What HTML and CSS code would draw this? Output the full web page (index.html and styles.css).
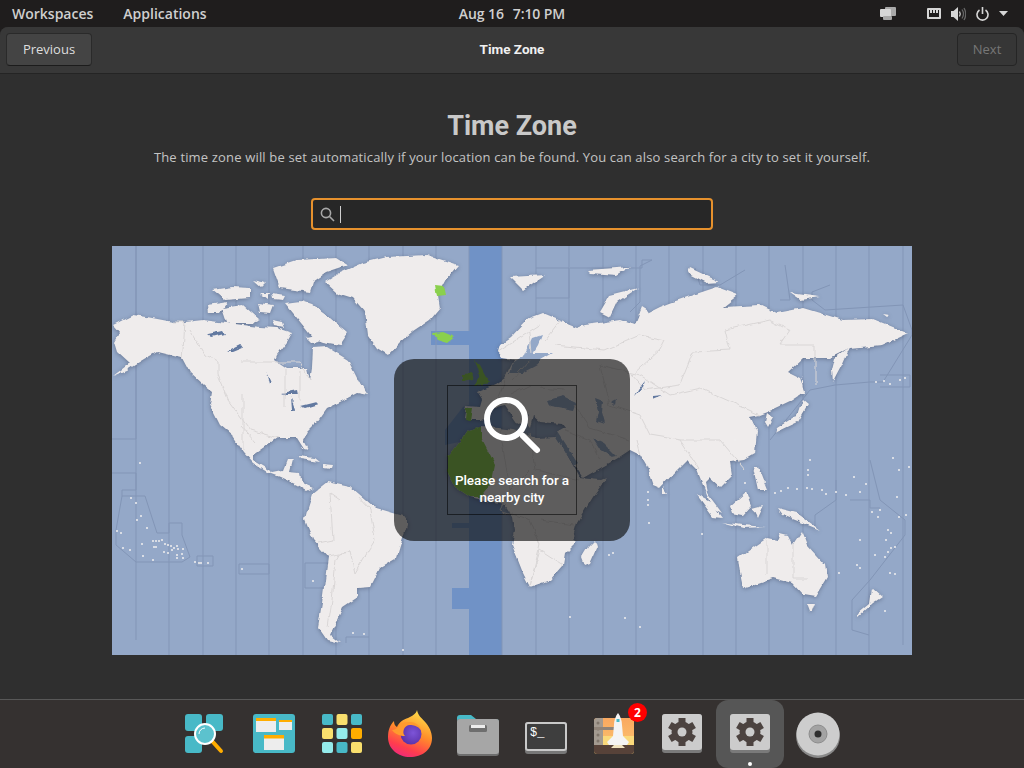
FILE: index.html
```html
<!DOCTYPE html>
<html lang="en">
<head>
<meta charset="utf-8">
<title>Time Zone</title>
<link rel="stylesheet" href="styles.css">
</head>
<body>
<div class="topbar">
  <div class="tb-left"><span class="tb-item">Workspaces</span><span class="tb-item">Applications</span></div>
  <div class="tb-clock"><span>Aug 16</span><span>7:10 PM</span></div>
  <div class="tb-right">
    <svg class="ic-windows" width="16" height="13" viewBox="0 0 16 13"><rect x="5" y="0" width="11" height="9" rx="1" class="gl-dim"/><rect x="0" y="2" width="11" height="8" rx="1" class="gl"/><rect x="3" y="9" width="9" height="4" rx="1" class="gl-dim"/></svg>
    <svg class="ic-net" width="14" height="12" viewBox="0 0 14 12"><path class="gl" fill-rule="evenodd" d="M1 0h12a1 1 0 0 1 1 1v9a1 1 0 0 1-1 1H1a1 1 0 0 1-1-1V1a1 1 0 0 1 1-1zM2 2v7h10V2h-1v3H9V2H8v3H6V2H5v3H3V2z"/></svg>
    <svg class="ic-vol" width="15" height="14" viewBox="0 0 15 14"><path class="gl" d="M0 4h2.500L7 0v14L2.500 10H0z"/><path class="st-gl" d="M8.500 4.500q1.500 2.500 0 5"/><path class="st-dim" d="M11 2.500q3 4.500 0 9M13 1q3.500 6 0 12"/></svg>
    <svg class="ic-pow" width="13" height="14" viewBox="0 0 13 14"><path class="st-gl2" d="M3.500 3a5.500 5.500 0 1 0 6 0M6.500 0v7"/></svg>
    <svg class="ic-caret" width="9" height="5" viewBox="0 0 9 5"><path class="gl" d="M0 0h9L4.500 5z"/></svg>
  </div>
</div>

<div class="window">
  <header class="headerbar">
    <button class="btn btn-prev">Previous</button>
    <div class="hb-title">Time Zone</div>
    <button class="btn btn-next">Next</button>
  </header>
  <main class="content">
    <h1 class="title">Time Zone</h1>
    <p class="subtitle">The time zone will be set automatically if your location can be found. You can also search for a city to set it yourself.</p>
    <div class="entry">
      <svg width="15" height="15" viewBox="0 0 15 15"><circle cx="6" cy="6" r="4.600" class="st-search"/><path class="st-search" d="M9.500 9.500l4.500 4.500"/></svg>
      <span class="caret"></span>
    </div>
    <div class="map">
      <svg class="map-svg" width="800" height="409" viewBox="112 246 800 409">
        <defs>
          <filter id="rough" filterUnits="userSpaceOnUse" x="112" y="246" width="800" height="409" color-interpolation-filters="sRGB">
            <feTurbulence type="fractalNoise" baseFrequency="0.09" numOctaves="3" seed="7" result="n"/>
            <feDisplacementMap in="SourceGraphic" in2="n" scale="5" xChannelSelector="R" yChannelSelector="G"/>
          </filter>
        </defs>
        <rect x="112" y="246" width="800" height="409" class="sea"/>
        <path class="band" d="M469 246h33v409h-33v-46h-17v-21h17v-60h-17v-5h17v-83l-24 5v-15l18-23 6-2v-60h-38v-14h38z"/>
        <path class="tz" d="M136 246V640M169 246V655M203 246V655M236 246V655M269 246V655M303 246V655M336 246V655M369 246V655M403 246V655M436 246V655M469 246V331M502 246V655M536 246V655M569 246V655M603 246V655M636 246V655M669 246V655M703 246V655M736 246V655M769 246V655M803 246V655M836 246V655M869 246V655M903 246V645"/>
        <path class="tz" d="M112 439H136V246M112 473H136V490H122V496H145L157 533H169V523H182V535L190 557L182 562H136L116 545V530L122 496M346 643V637H369M305 563H328V588H305zM239 564H269V574H239zM197 556H213V566H197zM536 268H569V298H536M570 268H642V260H652M652 260L640 266V302L630 312M695 268L700 285H720L745 270M785 265L790 300L780 300M830 285L812 292V300L825 310L903 305L912 330V335L883 382H870L835 385L810 390L770 440M880 375H910V387H880M836 480V500L815 515V530M870 460L880 500L905 520V535L870 580L852 600V630L869 635M850 500H870V508H880"/>

        <g class="land-g"><g filter="url(#rough)">
          <path class="land" d="M113 325L133 315L147 317L173 322L185 322L203 320L227 323L243 325L260 327L277 328L292 333L287 342L277 355L275 360L287 368L307 368L310 380L312 367L313 348L327 347L348 360L358 380L368 395L357 393L340 402L327 408L317 422L307 432L303 440L308 450L304 449L297 438L277 438L267 445L253 455L253 460L273 472L283 470L287 460L293 460L290 472L300 473L302 483L313 488L307 491L297 485L280 477L267 472L253 463L243 452L232 435L220 425L210 405L212 392L203 385L190 373L182 358L157 352L143 360L127 370L113 376L130 363L118 352L115 342L120 333z"/>
          <path class="land" d="M285 303L300 301L312 305L330 318L348 333L340 345L323 342L313 338L293 313zM273 268L297 260L337 258L348 265L327 272L313 282L310 292L280 288zM222 308L243 305L260 320L253 323L227 323zM207 305L227 302L220 313L208 313zM213 290L232 287L250 288L250 298L225 300zM258 303L273 305L270 313L260 312zM253 280L267 283L262 288zM272 294L285 296L283 300L273 299zM260 293L270 293L268 299zM306 337L315 335L320 342L312 343zM272 320L282 322L284 328L274 326zM349 385L358 379L364 393L352 392z"/>
          <path class="land" d="M325 282L340 273L363 263L387 257L427 255L458 265L447 278L438 295L440 308L430 320L412 332L400 342L388 355L377 348L368 335L365 312L353 298L337 293z"/>
          <path class="land" d="M498 352L500 345L510 338L527 320L543 314L560 321L577 328L585 325L620 320L635 325L642 307L650 312L660 307L670 303L693 295L717 287L738 295L723 307L760 305L777 313L803 308L843 320L873 319L908 333L893 340L882 345L850 348L830 358L803 358L788 372L800 378L805 392L790 402L773 410L760 415L750 417L757 432L755 453L743 460L730 462L732 475L720 487L710 478L705 483L707 493L722 513L712 508L697 470L687 460L677 470L660 488L653 485L647 467L640 455L630 450L618 458L583 478L573 463L560 442L558 432L565 428L562 424L540 422L533 416L530 428L524 421L528 415L520 408L526 422L518 424L505 405L495 407L482 420L470 420L464 418L466 406L480 407L482 400L477 392L495 385L505 378L510 368L514 360L503 358z"/>
          <path class="land" d="M468 430L482 426L513 430L537 438L556 437L560 442L580 478L600 480L607 477L593 497L577 523L572 540L575 543L565 553L563 565L550 580L530 587L523 573L512 545L515 530L513 517L505 505L495 503L470 497L455 487L448 473L448 457L460 442z"/>
          <path class="land" d="M595 540L597 547L590 563L585 565L582 557L588 547z"/>
          <path class="land" d="M307 512L313 493L327 482L350 487L373 507L407 517L407 525L400 547L397 557L380 567L370 587L358 588L358 597L343 607L337 620L330 635L340 643L327 640L318 627L322 603L328 557L313 540L305 520z"/>
          <path class="land" d="M298 456L315 458L320 462L300 459zM323 464L333 465L332 468L323 467z"/>
          <path class="land" d="M738 558L767 538L777 540L780 533L788 535L793 545L802 532L807 545L825 565L827 577L815 597L803 595L792 583L773 578L743 588L740 573zM807 603L815 603L812 611L810 611zM872 588L882 597L873 603L857 618L858 613L870 603z"/>
          <path class="land" d="M777 508L797 513L820 530L803 523L782 515zM730 507L747 492L752 505L743 515L732 513zM697 495L710 502L722 518L713 517zM722 522L743 525L767 527L743 528zM752 508L763 505L757 518zM753 467L758 467L767 490L758 490zM663 487L667 493L663 493z"/>
          <path class="land" d="M802 400L808 405L798 422L775 433L777 428L797 415zM802 375L805 395L802 395zM767 413L773 418L768 427L765 422zM850 347L843 363L833 382L832 370L835 358zM638 288L617 302L610 317L600 312L610 295zM510 277L545 275L523 290zM587 270L630 267L617 275L590 273zM690 268L720 282L707 283L688 273zM790 293L820 297L800 300zM883 314L890 315L887 317z"/>
        </g></g>
        <path class="isl" d="M140 463h.01M131 498h.01M136 503h.01M141 516h.01M137 520h.01M147 528h.01M117 531h.01M121 533h.01M123 548h.01M130 550h.01M142 544h.01M143 556h.01M153 541h.01M156 541h.01M159 541h.01M162 540h.01M165 544h.01M168 545h.01M171 546h.01M174 548h.01M154 547h.01M156 547h.01M164 552h.01M168 553h.01M172 550h.01M177 546h.01M178 549h.01M183 549h.01M182 554h.01M177 555h.01M183 558h.01M177 558h.01M153 560h.01M195 562h.01M199 563h.01M201 563h.01M208 563h.01M242 569h.01M313 581h.01M353 633h.01M364 634h.01M649 523h.01M702 497h.01M648 492h.01M648 500h.01M648 505h.01M702 534h.01M775 493h.01M781 491h.01M788 488h.01M797 489h.01M807 488h.01M812 489h.01M822 490h.01M826 494h.01M836 492h.01M846 495h.01M860 492h.01M866 484h.01M854 477h.01M810 460h.01M808 470h.01M808 475h.01M872 512h.01M878 517h.01M880 510h.01M897 497h.01M906 515h.01M899 517h.01M888 530h.01M886 540h.01M891 548h.01M888 552h.01M895 547h.01M885 557h.01M891 533h.01M899 470h.01M909 467h.01M860 540h.01M857 565h.01M890 573h.01M895 574h.01M609 555h.01M613 553h.01M570 617h.01M640 627h.01M625 618h.01M885 611h.01M839 573h.01M860 568h.01M875 555h.01M620 422h.01M745 483h.01M765 482h.01M735 440h.01M893 458h.01M520 278h.01M890 384h.01M876 382h.01M884 381h.01M900 380h.01M905 378h.01M403 650h.01"/>
        <g filter="url(#rough)">
          <path class="lake" d="M208 334L222 331L224 334L212 337zM226 352L240 345L242 348L232 352L228 352zM282 393L297 390L298 395L287 395zM291 398L295 410L292 410zM300 406L316 402L318 404L305 408zM267 372L272 383L270 384zM638 390L646 380L644 386L635 396zM652 396L662 395L652 399z"/>
          <path class="inner" d="M525 355L533 338L542 335L538 345L533 353L552 353L540 360L538 365L523 373L510 373L513 363zM548 400L563 396L577 403L574 411L557 408L551 407zM595 398L603 401L602 413L605 424L596 421L598 412zM558 432L578 463L574 466L555 436zM593 438L605 444L617 456L612 457L600 449zM612 402L616 400L615 405z"/>
          <path class="bord" d="M173 322L185 322L183 350M190 330L205 355L218 362L218 375L228 400L250 430L278 438M240 362L300 362L310 380M243 393L243 450M240 425L256 443M285 370V408M300 370L300 400M183 350L182 358M340 500L330 493L333 540L318 543M358 497L370 510L375 540L358 568L355 573L350 552L340 553L336 560L332 600L328 628M328 556L350 552M498 352L540 325M530 333L532 352M560 321L545 340M555 345L605 350L640 335L665 340L660 350L632 375L645 390L680 385L693 352L730 350L725 330L770 320L790 330L780 345L815 345L815 385M600 365L640 375L670 395L700 388L760 415M600 365L610 405L640 415L650 435L680 440L720 440L745 470M680 440L690 455L700 470M636 440L640 455M512 380L530 360M495 407L505 380M510 395L530 385M540 388L565 390M575 405L590 428L630 440M565 430L590 440L600 460M500 430L510 490L500 510L530 520L540 545L530 585M530 433L535 470L580 480M530 470L510 490M540 520L575 525M530 585L540 550L563 565M767 540L767 575M793 545L793 578L807 578"/>
          <path class="green" d="M435 285L444 286L446 295L437 296zM432 333L443 332L455 337L447 343L437 340zM475 360L480 365L488 380L490 383L475 385L480 375zM463 373L473 372L472 380L463 382zM466 408L472 408L470 421L465 420zM468 430L482 426L482 440L495 465L493 475L490 485L480 497L470 497L455 487L448 473L448 457L460 442z"/>
        </g>
      </svg>
      <div class="overlay">
        <div class="ov-box">
          <svg class="ov-icon" width="64" height="64" viewBox="0 0 64 64"><circle cx="27" cy="26" r="19" class="ov-st"/><path class="ov-st" d="M44 43L58 57"/></svg>
          <div class="ov-text">Please search for a nearby city</div>
        </div>
      </div>
    </div>
  </main>
</div>

<nav class="dock">
  <div class="slot"><svg width="48" height="48" viewBox="0 0 48 48"><rect x="3" y="4" width="17" height="17" rx="3" class="teal"/><rect x="24" y="4" width="17" height="17" rx="3" class="teal"/><rect x="3" y="26" width="17" height="17" rx="3" class="teal"/><path d="M30 31L39 41" class="st-handle"/><circle cx="23" cy="24" r="10" class="mag"/><path d="M17 24a6 6 0 0 1 6-6" class="mag-sh"/></svg></div>
  <div class="slot"><svg width="48" height="48" viewBox="0 0 48 48"><rect x="3" y="4" width="42" height="39" rx="3" class="teal"/><rect x="6" y="8" width="20" height="14" class="win"/><rect x="6" y="8" width="20" height="3" class="orange"/><rect x="29" y="10" width="13" height="10" class="win"/><rect x="29" y="10" width="13" height="2" class="orange"/><rect x="14" y="25" width="20" height="15" class="win"/><rect x="14" y="25" width="20" height="3.500" class="orange"/></svg></div>
  <div class="slot"><svg width="48" height="48" viewBox="0 0 48 48"><rect x="4" y="4" width="11" height="11" rx="2" class="teal"/><rect x="18.500" y="4" width="11" height="11" rx="2" class="yellow"/><rect x="33" y="4" width="11" height="11" rx="2" class="teal"/><rect x="4" y="18" width="11" height="11" rx="2" class="yellow"/><rect x="18.500" y="18" width="11" height="11" rx="2" class="cyan"/><rect x="33" y="18" width="11" height="11" rx="2" class="orange"/><rect x="4" y="32" width="11" height="11" rx="2" class="cyan"/><rect x="18.500" y="32" width="11" height="11" rx="2" class="teal"/><rect x="33" y="32" width="11" height="11" rx="2" class="yellow"/></svg></div>
  <div class="slot"><svg width="48" height="48" viewBox="0 0 48 48">
    <defs><linearGradient id="ff" x1="0.700" y1="0" x2="0.300" y2="1"><stop offset="0" stop-color="#ffe14b"/><stop offset="0.450" stop-color="#ff8f2a"/><stop offset="0.800" stop-color="#ff3d4e"/><stop offset="1" stop-color="#ee2a7b"/></linearGradient>
    <radialGradient id="ffb" cx="0.600" cy="0.450" r="0.600"><stop offset="0" stop-color="#7d54d8"/><stop offset="1" stop-color="#5a32a8"/></radialGradient></defs>
    <path d="M31 0C32 6 36 8 40 13C45 19 46 25 46 28C46 40 36 47 24 47C12 47 2 39 2 27C2 20 4 15 8 11C8 14 9 16 11 17C13 12 18 9 22 8C26 6 30 4 31 0z" fill="url(#ff)"/>
    <circle cx="25" cy="24" r="10.500" fill="url(#ffb)"/>
    <path d="M14 14C18 12 25 11 29 13C33 15 35 18 35 20C32 16 27 15 24 15C21 15 19 17 18 19C17 22 17 24 19 26C14 26 9 24 6 20C9 20 12 18 14 14z" class="ff-sw"/>
  </svg></div>
  <div class="slot"><svg width="48" height="48" viewBox="0 0 48 48"><path d="M3 8a3 3 0 0 1 3-3h11l5 4h20a3 3 0 0 1 3 3v8H3z" class="teal"/><rect x="3" y="9" width="42" height="37" rx="3" class="fold-d"/><rect x="3" y="9" width="42" height="35" rx="3" class="fold"/><rect x="15" y="15" width="18" height="7" rx="1.500" class="fold-d"/><rect x="17" y="15" width="14" height="3" class="win"/></svg></div>
  <div class="slot"><svg width="48" height="48" viewBox="0 0 48 48"><rect x="3" y="12" width="42" height="32" rx="3" class="ter-d"/><rect x="3" y="12" width="42" height="29" rx="3" class="ter"/><rect x="5" y="14" width="38" height="25" rx="1" class="ter-in"/><text x="8" y="26" class="ter-t">$_</text></svg></div>
  <div class="slot"><svg width="48" height="48" viewBox="0 0 48 48"><defs><linearGradient id="rk" x1="0" y1="0" x2="0" y2="1"><stop offset="0" stop-color="#f9a860"/><stop offset="0.500" stop-color="#fbb868"/><stop offset="0.510" stop-color="#fbd97a"/><stop offset="1" stop-color="#fbd97a"/></linearGradient></defs><rect x="4" y="8" width="40" height="36" rx="3" fill="url(#rk)"/><path d="M4 35h40v6a3 3 0 0 1-3 3H7a3 3 0 0 1-3-3z" class="rk-d"/><path d="M4 11a3 3 0 0 1 3-3h6v27H4z" class="rk-s"/><path d="M8 13h.01M8 19h.01M8 25h.01M8 31h.01" class="rk-dots"/><rect x="4" y="17" width="24" height="3" class="rk-bar"/><path d="M28 3C30.500 6 32 11 32 15L33 26L39 32L37 35H19L17 32L23 26L24 15C24 11 25.500 6 28 3z" class="win-w"/><rect x="26.500" y="9" width="3" height="3" class="teal"/><path d="M24 35L21 38H35L32 35z" class="rk-fl"/></svg><span class="badge">2</span></div>
  <div class="slot"><svg width="48" height="48" viewBox="0 0 48 48"><use href="#gearicon"/></svg></div>
  <div class="slot slot-active"><svg width="48" height="48" viewBox="0 0 48 48"><g id="gearicon"><rect x="4" y="4" width="40" height="39" rx="3" class="gear-d"/><rect x="4" y="4" width="40" height="36" rx="3" class="gear-bg"/><g class="gear"><rect x="20.500" y="8" width="7" height="28"/><rect x="20.500" y="8" width="7" height="28" transform="rotate(60 24 22)"/><rect x="20.500" y="8" width="7" height="28" transform="rotate(120 24 22)"/><circle cx="24" cy="22" r="10.500"/></g><circle cx="24" cy="22" r="4.500" class="gear-bg"/></g></svg><span class="dot"></span></div>
  <div class="slot"><svg width="48" height="48" viewBox="0 0 48 48"><circle cx="24" cy="26" r="22" class="disc-d"/><circle cx="24" cy="24" r="21.500" class="disc"/><circle cx="24" cy="24" r="9" class="disc-r"/><circle cx="24" cy="24" r="3.500" class="disc-c"/></svg></div>
</nav>
</body>
</html>
```

FILE: styles.css
```css
* { box-sizing: border-box; }
html, body { margin: 0; height: 100%; }
body {
  width: 1024px; height: 768px; overflow: hidden;
  display: flex; flex-direction: column;
  background: #1f1d1d;
  font-family: "Open Sans", "Noto Sans", sans-serif;
  color: #dcdcdc;
}
.topbar {
  height: 27px; flex: none; display: grid; grid-template-columns: 1fr auto 1fr; align-items: center;
  background: #1f1d1d; color: #cfcfcf; font-size: 14px; font-weight: 600;
}
.tb-left { display: flex; gap: 30px; padding-left: 12px; }
.tb-clock { display: flex; gap: 9px; letter-spacing: -0.1px; }
.tb-right { display: flex; align-items: center; justify-content: flex-end; padding-right: 16px; }
.ic-windows { margin-right: 31px; }
.ic-net { margin-right: 10px; }
.ic-vol { margin-right: 10px; }
.ic-caret { margin-left: 10px; }
.gl { fill: #d6d6d6; }
.gl-dim { fill: #a9a9a9; }
.st-gl { fill: none; stroke: #d6d6d6; stroke-width: 1.3; }
.st-dim { fill: none; stroke: #666; stroke-width: 1.3; }
.st-gl2 { fill: none; stroke: #d6d6d6; stroke-width: 1.600; }

.window { flex: 1; min-height: 0; display: flex; flex-direction: column; background: #2f2f2f; border-radius: 8px 8px 0 0; overflow: hidden; }
.headerbar {
  height: 47px; flex: none; display: flex; align-items: flex-start; justify-content: space-between;
  padding: 6px 7px 0 6px; background: #383838; border-bottom: 1px solid #242424; position: relative;
}
.btn {
  height: 33px; font-family: inherit; font-size: 13px; border-radius: 4px; padding: 0 0 2px;
}
.btn-prev { width: 86px; background: #444; color: #dedede; border: 1px solid #2a2a2a; border-bottom-color: #1c1c1c; }
.btn-next { width: 60px; background: #363636; color: #777; border: 1px solid #252525; }
.hb-title { position: absolute; left: 0; right: 0; top: 0; line-height: 44px; text-align: center; font-family: Roboto, sans-serif; font-size: 13.500px; font-weight: 700; color: #f0f0f0; }
.content { flex: 1; display: flex; flex-direction: column; align-items: center; padding-top: 34px; }
.title { margin: 0; font-family: Roboto, sans-serif; font-size: 27px; line-height: 36px; font-weight: 700; color: #c9c9c9; }
.subtitle { margin: 4px 0 0; font-size: 13px; line-height: 18px; color: #c4c4c4; letter-spacing: 0.165px; }
.entry {
  margin-top: 32px; width: 402px; height: 32px; display: flex; align-items: center; gap: 5px; padding-left: 7px;
  background: #272727; border: 2px solid #e6912d; border-radius: 4px;
}
.caret { width: 1px; height: 17px; background: #cfcfcf; }
.st-search { fill: none; stroke: #a8a8a8; stroke-width: 1.600; }
.map { margin-top: 16px; width: 800px; height: 409px; position: relative; }
.map-svg { display: block; }
.sea { fill: #94a8c8; }
.band { fill: #7092c6; }
.tz { fill: none; stroke: #8295b6; stroke-width: 1; }
.land-g { filter: drop-shadow(0 1px 2px rgba(50, 60, 85, .45)); }
.land { fill: #efecec; }
.lake { fill: #6279a0; }
.inner { fill: #94a8c8; }
.isl { fill: none; stroke: #f0eeee; stroke-width: 2; stroke-linecap: round; }
.bord { fill: none; stroke: #d9d6d6; stroke-width: 1; }
.green { fill: #8ad04d; }
.overlay {
  position: absolute; left: 282px; top: 113px; width: 236px; height: 182px;
  background: rgba(12, 12, 12, .64); border-radius: 20px;
  display: flex; align-items: center; justify-content: center;
}
.ov-box { width: 130px; height: 130px; border: 1px solid rgba(0, 0, 0, .55); display: flex; flex-direction: column; align-items: center; }
.ov-icon { margin-top: 7px; margin-left: -2px; }
.ov-st { fill: none; stroke: #fff; stroke-width: 6; stroke-linecap: round; }
.ov-text { margin-top: 15px; font-family: Roboto, sans-serif; font-size: 13.500px; line-height: 17px; font-weight: 500; color: #fff; text-align: center; width: 128px; letter-spacing: -0.1px; }

.dock { height: 69px; flex: none; display: flex; justify-content: center; align-items: center; background: #353130; border-top: 1px solid #585858; }
.slot { width: 68px; height: 68px; display: flex; align-items: center; justify-content: center; position: relative; }
.slot svg { display: block; }
.slot-active { background: #565656; border-radius: 12px; }
.badge { position: absolute; left: 48px; top: 3px; width: 19px; height: 19px; border-radius: 50%; background: #f00; color: #fff; font-size: 12px; font-weight: 700; line-height: 19px; text-align: center; }
.dot { position: absolute; left: 32px; top: 62px; width: 4px; height: 4px; border-radius: 50%; background: #fff; }
.teal { fill: #48b9c7; }
.yellow { fill: #f9df6d; }
.cyan { fill: #94ebeb; }
.orange { fill: #ffad00; }
.win { fill: #ededed; }
.win-w { fill: #f4f4f4; }
.mag { fill: #5cc2ce; stroke: #fff; stroke-width: 2; }
.mag-sh { fill: none; stroke: #fff; stroke-width: 1; }
.st-handle { stroke: #ffad00; stroke-width: 4; stroke-linecap: round; fill: none; }
.ff-sw { fill: #ff9a2e; }
.fold { fill: #a6a6a6; }
.fold-d { fill: #6e6e6e; }
.ter { fill: #c9c9c9; }
.ter-d { fill: #777; }
.ter-in { fill: #3e3e3e; }
.ter-t { font-family: "Liberation Mono", monospace; font-size: 12px; fill: #fff; }
.rk-d { fill: #574239; }
.rk-s { fill: #a39a90; }
.rk-bar { fill: #8f8378; }
.rk-dots { stroke: #7f756b; stroke-width: 3; stroke-linecap: round; }
.rk-fl { fill: #f0e3c0; }
.gear-bg { fill: #ccc; }
.gear-d { fill: #7a7a7a; }
.gear { fill: #4c4340; }
.disc { fill: #cdcdcd; }
.disc-d { fill: #8a8a8a; }
.disc-r { fill: #a3a3a3; stroke: #8d8d8d; stroke-width: 1; }
.disc-c { fill: #2e2e2e; }
```
